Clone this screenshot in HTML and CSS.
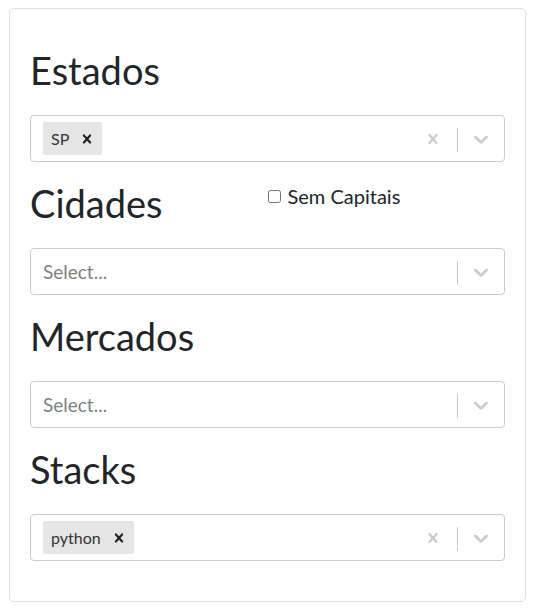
FILE: index.html
```html
<!DOCTYPE html>
<html lang="pt">
<head>
<meta charset="utf-8">
<title>Filtros</title>
<link rel="stylesheet" href="styles.css">
</head>
<body>
<div class="card">
  <div class="card-body">
    <section class="group">
      <h1 class="title">Estados</h1>
      <div class="select">
        <div class="values">
          <div class="chip"><span class="chip-label">SP</span><span class="chip-remove"><svg viewBox="0 0 20 20" width="18" height="18"><path d="M14.348 14.849c-0.469 0.469-1.229 0.469-1.697 0l-2.651-3.030-2.651 3.029c-0.469 0.469-1.229 0.469-1.697 0-0.469-0.469-0.469-1.229 0-1.697l2.758-3.15-2.759-3.152c-0.469-0.469-0.469-1.228 0-1.697s1.228-0.469 1.697 0l2.652 3.031 2.651-3.031c0.469-0.469 1.228-0.469 1.697 0s0.469 1.229 0 1.697l-2.758 3.152 2.758 3.15c0.469 0.469 0.469 1.229 0 1.698z"/></svg></span></div>
        </div>
        <div class="clear"><svg viewBox="0 0 20 20" width="20" height="20"><path d="M14.348 14.849c-0.469 0.469-1.229 0.469-1.697 0l-2.651-3.030-2.651 3.029c-0.469 0.469-1.229 0.469-1.697 0-0.469-0.469-0.469-1.229 0-1.697l2.758-3.15-2.759-3.152c-0.469-0.469-0.469-1.228 0-1.697s1.228-0.469 1.697 0l2.652 3.031 2.651-3.031c0.469-0.469 1.228-0.469 1.697 0s0.469 1.229 0 1.697l-2.758 3.152 2.758 3.15c0.469 0.469 0.469 1.229 0 1.698z"/></svg></div>
        <span class="sep"></span>
        <div class="drop"><svg viewBox="0 0 20 20" width="24" height="24"><path d="M4.516 7.548c0.436-0.446 1.043-0.481 1.576 0l3.908 3.747 3.908-3.747c0.533-0.481 1.141-0.446 1.574 0 0.436 0.445 0.408 1.197 0 1.615-0.406 0.418-4.695 4.502-4.695 4.502-0.217 0.223-0.502 0.335-0.787 0.335s-0.57-0.112-0.789-0.335c0 0-4.287-4.084-4.695-4.502s-0.436-1.17 0-1.615z"/></svg></div>
      </div>
    </section>

    <section class="group">
      <div class="head-row">
        <h1 class="title">Cidades</h1>
        <label class="check"><input type="checkbox"> Sem Capitais</label>
      </div>
      <div class="select">
        <div class="values"><span class="placeholder">Select...</span></div>
        <span class="sep"></span>
        <div class="drop"><svg viewBox="0 0 20 20" width="24" height="24"><path d="M4.516 7.548c0.436-0.446 1.043-0.481 1.576 0l3.908 3.747 3.908-3.747c0.533-0.481 1.141-0.446 1.574 0 0.436 0.445 0.408 1.197 0 1.615-0.406 0.418-4.695 4.502-4.695 4.502-0.217 0.223-0.502 0.335-0.787 0.335s-0.57-0.112-0.789-0.335c0 0-4.287-4.084-4.695-4.502s-0.436-1.17 0-1.615z"/></svg></div>
      </div>
    </section>

    <section class="group">
      <h1 class="title">Mercados</h1>
      <div class="select">
        <div class="values"><span class="placeholder">Select...</span></div>
        <span class="sep"></span>
        <div class="drop"><svg viewBox="0 0 20 20" width="24" height="24"><path d="M4.516 7.548c0.436-0.446 1.043-0.481 1.576 0l3.908 3.747 3.908-3.747c0.533-0.481 1.141-0.446 1.574 0 0.436 0.445 0.408 1.197 0 1.615-0.406 0.418-4.695 4.502-4.695 4.502-0.217 0.223-0.502 0.335-0.787 0.335s-0.57-0.112-0.789-0.335c0 0-4.287-4.084-4.695-4.502s-0.436-1.17 0-1.615z"/></svg></div>
      </div>
    </section>

    <section class="group">
      <h1 class="title">Stacks</h1>
      <div class="select">
        <div class="values">
          <div class="chip"><span class="chip-label">python</span><span class="chip-remove"><svg viewBox="0 0 20 20" width="18" height="18"><path d="M14.348 14.849c-0.469 0.469-1.229 0.469-1.697 0l-2.651-3.030-2.651 3.029c-0.469 0.469-1.229 0.469-1.697 0-0.469-0.469-0.469-1.229 0-1.697l2.758-3.15-2.759-3.152c-0.469-0.469-0.469-1.228 0-1.697s1.228-0.469 1.697 0l2.652 3.031 2.651-3.031c0.469-0.469 1.228-0.469 1.697 0s0.469 1.229 0 1.697l-2.758 3.152 2.758 3.15c0.469 0.469 0.469 1.229 0 1.698z"/></svg></span></div>
        </div>
        <div class="clear"><svg viewBox="0 0 20 20" width="20" height="20"><path d="M14.348 14.849c-0.469 0.469-1.229 0.469-1.697 0l-2.651-3.030-2.651 3.029c-0.469 0.469-1.229 0.469-1.697 0-0.469-0.469-0.469-1.229 0-1.697l2.758-3.15-2.759-3.152c-0.469-0.469-0.469-1.228 0-1.697s1.228-0.469 1.697 0l2.652 3.031 2.651-3.031c0.469-0.469 1.228-0.469 1.697 0s0.469 1.229 0 1.697l-2.758 3.152 2.758 3.15c0.469 0.469 0.469 1.229 0 1.698z"/></svg></div>
        <span class="sep"></span>
        <div class="drop"><svg viewBox="0 0 20 20" width="24" height="24"><path d="M4.516 7.548c0.436-0.446 1.043-0.481 1.576 0l3.908 3.747 3.908-3.747c0.533-0.481 1.141-0.446 1.574 0 0.436 0.445 0.408 1.197 0 1.615-0.406 0.418-4.695 4.502-4.695 4.502-0.217 0.223-0.502 0.335-0.787 0.335s-0.57-0.112-0.789-0.335c0 0-4.287-4.084-4.695-4.502s-0.436-1.17 0-1.615z"/></svg></div>
      </div>
    </section>
  </div>
</div>
</body>
</html>
```

FILE: styles.css
```css
* { box-sizing: border-box; }

html, body {
  margin: 0;
  background: #fff;
}

body {
  padding: 8px 9px 0 9px;
  font-family: Lato, "Liberation Sans", sans-serif;
  color: #212529;
}

.card {
  border: 1px solid #dfdfdf;
  border-radius: 5px;
  background: #fff;
}

.card-body {
  padding: 37px 20px 40px 20px;
  display: flex;
  flex-direction: column;
  gap: 17px;
}

.group {
  display: flex;
  flex-direction: column;
  gap: 21px;
}

.title {
  margin: 0;
  padding-top: 1px;
  font-size: 38px;
  font-weight: 400;
  line-height: 47px;
  height: 48px;
}

.head-row {
  display: grid;
  grid-template-columns: 1fr 1fr;
  align-items: start;
}

.check {
  display: flex;
  align-items: center;
  margin-top: 2px;
  font-size: 20px;
  line-height: 30px;
  color: #212529;
}

.check input {
  width: 13px;
  height: 13px;
  margin: 0 7px 0 0;
}

.select {
  display: flex;
  align-items: center;
  height: 47px;
  border: 1px solid #ccc;
  border-radius: 4px;
  background: #fff;
}

.values {
  flex: 1;
  display: flex;
  align-items: center;
  padding: 0 12px;
  min-width: 0;
}

.placeholder {
  font-size: 19px;
  color: #808080;
}

.chip {
  display: flex;
  align-items: center;
  height: 33px;
  background: #e6e6e6;
  border-radius: 2px;
}

.chip-label {
  font-size: 16px;
  color: #333;
  padding: 0 3px 0 8px;
}

.chip-remove {
  display: flex;
  align-items: center;
  padding: 0 6px;
  fill: #222;
}

.clear {
  display: flex;
  align-items: center;
  padding: 0 14px;
  fill: #ccc;
}

.sep {
  width: 1px;
  height: 24px;
  margin-top: 2px;
  background: #ccc;
}

.drop {
  display: flex;
  align-items: center;
  padding: 0 11px;
  fill: #ccc;
}

svg { display: block; }
```
